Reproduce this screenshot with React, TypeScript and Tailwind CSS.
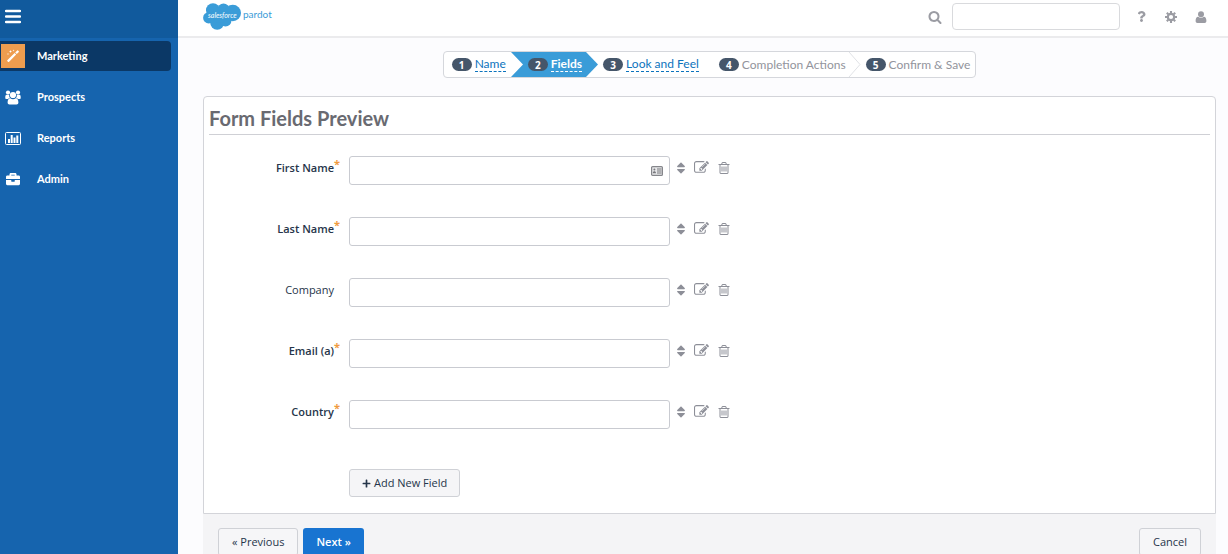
import React from 'react';
import { FaBriefcase, FaPlus, FaQuestion, FaSort } from 'react-icons/fa';

interface FormField {
  id: string;
  label: string;
  required: boolean;
  contactIcon?: boolean;
}

const FIELDS: FormField[] = [
  { id: 'first-name', label: 'First Name', required: true, contactIcon: true },
  { id: 'last-name', label: 'Last Name', required: true },
  { id: 'company', label: 'Company', required: false },
  { id: 'email', label: 'Email (a)', required: true },
  { id: 'country', label: 'Country', required: true }
];

const WandIcon = () => (
  <svg viewBox="0 0 14 14" className="size-[14px]" fill="currentColor" aria-hidden="true">
    <path d="M1.300 11.300L8.600 4l1.600 1.600-7.300 7.300q-.4.4-.8 0l-.8-.8q-.4-.4 0-.8zM9.200 3.400L11.200 1.400q.4-.4.8 0l.8.8q.4.4 0 .8l-2 2z" />
    <path d="M4.500 1l.4 1.100 1.100.4-1.100.4L4.500 4l-.4-1.100L3 2.500l1.100-.4zM2 4l.3.700.7.3-.7.3L2 6l-.3-.7L1 5l.7-.3zM7.500.500l.3.700.7.3-.7.3-.3.700-.3-.7-.7-.3.7-.3z" />
  </svg>
);

const UsersIcon = () => (
  <svg viewBox="0 0 16 15" className="h-[15px] w-4" fill="currentColor" aria-hidden="true">
    <circle cx="3" cy="2.6" r="2.1" />
    <circle cx="13" cy="2.6" r="2.1" />
    <circle cx="8" cy="5" r="3.1" />
    <path d="M.3 8.600V7c0-1.700.7-2.600 1.700-2.300.8.3 1.500.3 2.200 0-.1 1.600.2 2.500.9 3.200-.9 0-1.500.3-2.100 1H1.400Q.3 8.900.3 8.600zM15.700 8.600V7c0-1.700-.7-2.600-1.700-2.300-.8.3-1.500.3-2.200 0 .1 1.600-.2 2.500-.9 3.200.9 0 1.500.3 2.100 1h1.600q1.100 0 1.100-.3z" />
    <path d="M2.600 12.600c0-2.600.9-4.300 2.700-4.300.7.6 1.600 1 2.700 1s2-.4 2.700-1c1.800 0 2.700 1.700 2.700 4.300 0 1.300-.7 2-1.900 2h-7c-1.200 0-1.900-.7-1.900-2z" />
  </svg>
);

const ChartIcon = () => (
  <svg viewBox="0 0 16 13" className="h-[13px] w-4" aria-hidden="true">
    <rect x=".5" y=".5" width="15" height="12" rx="1" fill="none" stroke="currentColor" />
    <path d="M3 7h2v4H3zM5.700 3h2v8h-2zM8.500 5.500h2V11h-2zM11.300 3.500h2V11h-2z" fill="currentColor" />
  </svg>
);

const SearchIcon = () => (
  <svg viewBox="0 0 1792 1792" className="size-[14px]" fill="currentColor" aria-hidden="true">
    <path d="M1216 832q0-185-131.500-316.500t-316.500-131.500-316.500 131.500-131.500 316.500 131.500 316.500 316.500 131.500 316.500-131.500 131.500-316.500zm512 832q0 52-38 90t-90 38q-54 0-90-38l-343-342q-179 124-399 124-143 0-273.500-55.500t-225-150-150-225-55.500-273.500 55.500-273.500 150-225 225-150 273.500-55.500 273.500 55.500 225 150 150 225 55.500 273.500q0 220-124 399l343 343q37 37 37 90z" />
  </svg>
);

const GearIcon = () => (
  <svg viewBox="0 0 12 12" className="size-3" fill="none" stroke="currentColor" aria-hidden="true">
    <circle cx="6" cy="6" r="3.200" strokeWidth="2.200" />
    <path
      d="M6 0v2.200M6 9.800V12M0 6h2.200M9.800 6H12M1.800 1.800l1.500 1.500M8.700 8.700l1.500 1.500M1.800 10.200l1.500-1.500M8.700 3.300l1.500-1.500"
      strokeWidth="2.100"
    />
  </svg>
);

const PersonIcon = () => (
  <svg viewBox="0 0 12 12" className="size-3" fill="currentColor" aria-hidden="true">
    <circle cx="6" cy="3.200" r="3" />
    <path d="M.6 10c0-2.500.8-4.300 2.500-4.300C3.900 6.400 4.900 6.800 6 6.800s2.100-.4 2.900-1.100c1.700 0 2.500 1.800 2.500 4.300 0 1.200-.7 2-1.800 2H2.400C1.300 12 .6 11.200.6 10z" />
  </svg>
);

const EditIcon = () => (
  <svg viewBox="0 0 1792 1792" className="size-[15px]" fill="currentColor" aria-hidden="true">
    <path d="M888 1184l116-116-152-152-116 116v56h96v96h56zm440-720q-16-16-33 1l-350 350q-17 17-1 33t33-1l350-350q17-17 1-33zm80 594v190q0 119-84.500 203.500t-203.500 84.500h-832q-119 0-203.500-84.500t-84.500-203.500v-832q0-119 84.500-203.500t203.500-84.500h832q63 0 117 25 15 7 18 23 3 17-9 29l-49 49q-14 14-32 8-23-6-45-6h-832q-66 0-113 47t-47 113v832q0 66 47 113t113 47h832q66 0 113-47t47-113v-126q0-13 9-22l64-64q15-15 35-7t20 29zm-96-738l288 288-672 672h-288v-288zm444 132l-92 92-288-288 92-92q28-28 68-28t68 28l152 152q28 28 28 68t-28 68z" />
  </svg>
);

const TrashIcon = () => (
  <svg viewBox="0 0 1792 1792" className="size-[14px]" fill="currentColor" aria-hidden="true">
    <path d="M704 736v576q0 14-9 23t-23 9h-64q-14 0-23-9t-9-23v-576q0-14 9-23t23-9h64q14 0 23 9t9 23zm256 0v576q0 14-9 23t-23 9h-64q-14 0-23-9t-9-23v-576q0-14 9-23t23-9h64q14 0 23 9t9 23zm256 0v576q0 14-9 23t-23 9h-64q-14 0-23-9t-9-23v-576q0-14 9-23t23-9h64q14 0 23 9t9 23zm128 724v-948h-896v948q0 22 7 40.500t14.500 27 10.500 8.500h832q3 0 10.500-8.500t14.500-27 7-40.500zm-672-1076h448l-48-117q-7-9-17-11h-317q-10 2-17 11zm928 32v64q0 14-9 23t-23 9h-96v948q0 83-47 143.500t-113 60.500h-832q-66 0-113-58.500t-47-141.500v-952h-96q-14 0-23-9t-9-23v-64q0-14 9-23t23-9h309l70-167q15-37 54-63t79-26h320q40 0 79 26t54 63l70 167h309q14 0 23 9t9 23z" />
  </svg>
);

const ContactCardIcon = () => (
  <svg viewBox="0 0 12 10" className="h-[10px] w-3" aria-hidden="true">
    <rect x=".6" y=".6" width="10.800" height="8.800" rx="1" fill="#e8e8ea" stroke="#85868b" strokeWidth="1.200" />
    <circle cx="3.400" cy="3.500" r="1" fill="#77787d" />
    <path d="M1.800 7.300c0-2.600 3.200-2.600 3.200 0zM6 2.400h4.500v1H6zM6 4.500h4.500v1H6zM6 6.600h4.500v1H6z" fill="#77787d" />
  </svg>
);

const Logo = () => (
  <svg viewBox="0 0 72 29" className="h-[29px] w-[72px]" role="img" aria-label="salesforce pardot">
    <g fill="#3a9cd8">
      <circle cx="10" cy="8.200" r="7" />
      <circle cx="20.500" cy="7.500" r="6" />
      <circle cx="29.800" cy="11" r="8.200" />
      <circle cx="5.700" cy="15.800" r="5.600" />
      <circle cx="14.200" cy="20.800" r="7" />
      <circle cx="22.500" cy="18.500" r="6" />
      <circle cx="17" cy="13" r="8" />
    </g>
    <text x="5" y="16" fontSize="7" fontStyle="italic" fontFamily="Lato, sans-serif" fill="#fff">salesforce</text>
    <text x="40" y="16" fontSize="10" fontFamily="Lato, sans-serif" fill="#3a9cd8">pardot</text>
  </svg>
);

const NAV_ITEMS = [
  { label: 'Marketing', icon: <WandIcon />, active: true },
  { label: 'Prospects', icon: <UsersIcon /> },
  { label: 'Reports', icon: <ChartIcon /> },
  { label: 'Admin', icon: <FaBriefcase className="size-[14px]" /> }
];

const Sidebar = () => (
  <aside className="w-[178px] shrink-0 bg-[#1664ae] text-white">
    <div className="flex h-[38px] items-start bg-[#115a9d] px-[5px] pt-[9px]">
      <button type="button" aria-label="Toggle menu">
        <svg viewBox="0 0 16 15" className="h-[15px] w-4" aria-hidden="true">
          <path d="M1 2h14M1 7.500h14M1 13h14" stroke="#fff" strokeWidth="2.500" strokeLinecap="round" />
        </svg>
      </button>
    </div>
    <nav className="flex flex-col gap-[11px] pt-[3px] pr-[7px] font-[Lato,sans-serif] text-[11px] font-bold">
      {NAV_ITEMS.map((item) => (
        <a
          key={item.label}
          href="#"
          className={
            item.active
              ? 'flex h-[30px] items-center gap-3 rounded-r bg-[#0b3866]'
              : 'flex h-[30px] items-center gap-3'
          }
        >
          <span
            className={
              item.active
                ? 'ml-px flex size-6 items-center justify-center bg-[#ee9d4f]'
                : 'ml-px flex size-6 items-center justify-center'
            }
          >
            {item.icon}
          </span>
          {item.label}
        </a>
      ))}
    </nav>
  </aside>
);

const TopBar = () => (
  <header className="flex h-[38px] shrink-0 items-start justify-between border-b-2 border-[#ebebed] bg-white pr-[21px] pl-[25px]">
    <a href="#" className="pt-[2px]">
      <Logo />
    </a>
    <div className="flex items-center pt-[3px] text-[#9b9ca3]">
      <label htmlFor="search" aria-label="Search" className="mr-[10px]">
        <SearchIcon />
      </label>
      <input
        id="search"
        type="text"
        className="mr-4 h-[27px] w-[168px] rounded border border-[#d9dadd] bg-white px-2 text-xs outline-none"
      />
      <div className="flex items-center gap-[18px]">
        <button type="button" aria-label="Help"><FaQuestion className="size-[11px]" /></button>
        <button type="button" aria-label="Settings"><GearIcon /></button>
        <button type="button" aria-label="Account"><PersonIcon /></button>
      </div>
    </div>
  </header>
);

const StepNumber = ({ value }: { value: number }) => (
  <span className="flex h-[13px] w-5 items-center justify-center rounded-full bg-[#45566a] font-['Open_Sans',sans-serif] text-[10px] font-bold text-white">
    {value}
  </span>
);

const Steps = () => (
  <ol className="flex h-[27px] items-stretch overflow-hidden rounded border border-[#d5d7dc] bg-white font-[Lato,sans-serif] text-xs leading-[14px] text-[#0b73bd]">
    <li className="flex items-center gap-[3px] pl-2">
      <StepNumber value={1} />
      <a href="#" className="border-b border-dashed border-[#0b73bd]">Name</a>
    </li>
    <li className="ml-[5px] flex">
      <svg viewBox="0 0 13 25" className="h-full w-[13px]" preserveAspectRatio="none" aria-hidden="true">
        <path d="M0 0h13v25H0l12-12.500z" fill="#3a9cd8" />
      </svg>
      <div className="flex items-center gap-[3px] bg-[#3a9cd8] px-1 text-white">
        <StepNumber value={2} />
        <a href="#" className="border-b border-dashed border-white font-bold">Fields</a>
      </div>
      <svg viewBox="0 0 13 25" className="h-full w-[13px]" preserveAspectRatio="none" aria-hidden="true">
        <path d="M0 0l12 12.500L0 25z" fill="#3a9cd8" />
      </svg>
    </li>
    <li className="ml-1 flex items-center gap-[3px]">
      <StepNumber value={3} />
      <a href="#" className="border-b border-dashed border-[#0b73bd]">Look and Feel</a>
    </li>
    <li className="ml-5 flex items-center gap-[3px] text-[#92949c]">
      <StepNumber value={4} />
      <span>Completion Actions</span>
    </li>
    <li className="ml-[2px] flex items-center gap-[3px] pr-[5px] text-[#92949c]">
      <svg viewBox="0 0 13 25" className="mr-[2px] h-full w-[13px]" preserveAspectRatio="none" aria-hidden="true">
        <path d="M1 0l11 12.500L1 25" fill="none" stroke="#e0e2e6" />
      </svg>
      <StepNumber value={5} />
      <span>Confirm &amp; Save</span>
    </li>
  </ol>
);

const FieldRow = ({ field }: { field: FormField }) => (
  <div className="flex h-[29px] items-start">
    <label
      htmlFor={field.id}
      className={
        field.required
          ? 'flex w-[131px] justify-end pt-1 text-[11px] leading-4 font-semibold text-[#26354a]'
          : 'flex w-[131px] justify-end pt-1 pr-[6px] text-[11px] leading-4 text-[#26354a]'
      }
    >
      {field.label}
      {field.required && <span className="w-[6px] text-right leading-2 font-bold text-[#f09a3e]">*</span>}
    </label>
    <div className="relative ml-[9px] h-[29px] w-[321px]">
      <input
        id={field.id}
        type="text"
        className="h-full w-full rounded-[3px] border border-[#c9cbd1] bg-white px-2 text-xs outline-none"
      />
      {field.contactIcon && (
        <span className="absolute top-[10px] right-[7px]">
          <ContactCardIcon />
        </span>
      )}
    </div>
    <div className="flex items-center pt-1 pl-1 text-[#8d8f98]">
      <button type="button" aria-label={`Move ${field.label}`}><FaSort className="size-[14px]" /></button>
      <button type="button" aria-label={`Edit ${field.label}`} className="ml-[6px]"><EditIcon /></button>
      <button type="button" aria-label={`Delete ${field.label}`} className="ml-2"><TrashIcon /></button>
    </div>
  </div>
);

const App: React.FC = () => {
  return (
    <div className="flex h-screen overflow-hidden bg-[#fcfcfe] font-['Open_Sans',sans-serif] text-[11px] text-[#26354a]">
      <Sidebar />
      <div className="flex min-w-0 flex-1 flex-col">
        <TopBar />
        <main className="min-h-0 flex-1 overflow-y-auto pt-[13px] pr-3 pl-[25px] [scrollbar-width:none]">
          <div className="flex justify-center">
            <Steps />
          </div>

          {/* Form preview */}
          <form className="mt-[18px]" onSubmit={(e) => e.preventDefault()}>
            <section className="rounded-t border border-[#d3d4d9] bg-white px-[5px] pt-[9px] pb-4">
              <h1 className="border-b border-[#cfd0d5] pb-1 font-[Lato,sans-serif] text-xl leading-6 font-bold text-[#696a71]">
                Form Fields Preview
              </h1>
              <div className="flex flex-col gap-8 pt-[21px]">
                {FIELDS.map((field) => (
                  <FieldRow key={field.id} field={field} />
                ))}
              </div>
              <button
                type="button"
                className="mt-10 ml-[140px] flex h-7 items-center gap-[3px] rounded-[3px] border border-[#cfd1d6] bg-[#f5f5f7] px-3"
              >
                <FaPlus className="size-[9px]" />
                Add New Field
              </button>
            </section>

            {/* Wizard navigation */}
            <footer className="flex items-center gap-[5px] bg-[#f4f4f6] px-[15px] py-[14px]">
              <button type="button" className="h-7 rounded-[3px] border border-[#cfd1d6] bg-[#f6f6f8] px-[13px]">
                « Previous
              </button>
              <button type="submit" className="h-7 rounded-[3px] bg-[#1874d1] px-[13px] font-semibold text-white">
                Next »
              </button>
              <button type="button" className="ml-auto h-7 rounded-[3px] border border-[#cfd1d6] bg-[#f6f6f8] px-[13px]">
                Cancel
              </button>
            </footer>
          </form>
        </main>
      </div>
    </div>
  );
};

export default App;
